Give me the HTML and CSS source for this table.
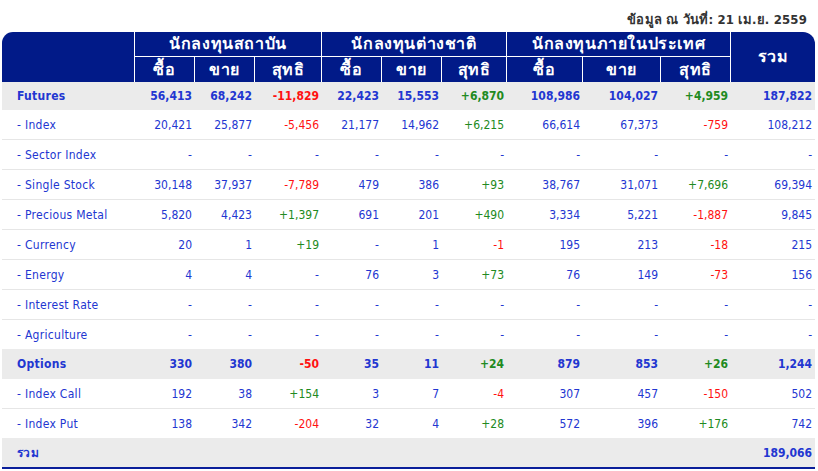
FILE: index.html
```html
<!DOCTYPE html>
<html lang="th">
<head>
<meta charset="utf-8">
<link rel="stylesheet" href="styles.css">
</head>
<body>
<div class="wrap">
  <div class="date">ข้อมูล ณ วันที่: 21 เม.ย. 2559</div>
  <table class="tbl">
    <colgroup>
      <col class="c-label">
      <col class="c60"><col class="c60"><col class="c67">
      <col class="c60"><col class="c60"><col class="c65">
      <col class="c76"><col class="c78"><col class="c70">
      <col class="c-total">
    </colgroup>
    <thead>
      <tr class="h1">
        <th rowspan="2" class="corner-l"></th>
        <th colspan="3">นักลงทุนสถาบัน</th>
        <th colspan="3">นักลงทุนต่างชาติ</th>
        <th colspan="3">นักลงทุนภายในประเทศ</th>
        <th rowspan="2" class="corner-r">รวม</th>
      </tr>
      <tr class="h2">
        <th>ซื้อ</th><th>ขาย</th><th>สุทธิ</th>
        <th>ซื้อ</th><th>ขาย</th><th>สุทธิ</th>
        <th>ซื้อ</th><th>ขาย</th><th>สุทธิ</th>
      </tr>
    </thead>
    <tbody>
      <tr class="grp first">
        <td class="lbl">Futures</td>
        <td>56,413</td><td>68,242</td><td class="neg">-11,829</td>
        <td>22,423</td><td>15,553</td><td class="pos">+6,870</td>
        <td>108,986</td><td>104,027</td><td class="pos">+4,959</td>
        <td>187,822</td>
      </tr>
      <tr class="sub">
        <td class="lbl">- Index</td>
        <td>20,421</td><td>25,877</td><td class="neg">-5,456</td>
        <td>21,177</td><td>14,962</td><td class="pos">+6,215</td>
        <td>66,614</td><td>67,373</td><td class="neg">-759</td>
        <td>108,212</td>
      </tr>
      <tr class="sub">
        <td class="lbl">- Sector Index</td>
        <td>-</td><td>-</td><td>-</td>
        <td>-</td><td>-</td><td>-</td>
        <td>-</td><td>-</td><td>-</td>
        <td>-</td>
      </tr>
      <tr class="sub">
        <td class="lbl">- Single Stock</td>
        <td>30,148</td><td>37,937</td><td class="neg">-7,789</td>
        <td>479</td><td>386</td><td class="pos">+93</td>
        <td>38,767</td><td>31,071</td><td class="pos">+7,696</td>
        <td>69,394</td>
      </tr>
      <tr class="sub">
        <td class="lbl">- Precious Metal</td>
        <td>5,820</td><td>4,423</td><td class="pos">+1,397</td>
        <td>691</td><td>201</td><td class="pos">+490</td>
        <td>3,334</td><td>5,221</td><td class="neg">-1,887</td>
        <td>9,845</td>
      </tr>
      <tr class="sub">
        <td class="lbl">- Currency</td>
        <td>20</td><td>1</td><td class="pos">+19</td>
        <td>-</td><td>1</td><td class="neg">-1</td>
        <td>195</td><td>213</td><td class="neg">-18</td>
        <td>215</td>
      </tr>
      <tr class="sub">
        <td class="lbl">- Energy</td>
        <td>4</td><td>4</td><td>-</td>
        <td>76</td><td>3</td><td class="pos">+73</td>
        <td>76</td><td>149</td><td class="neg">-73</td>
        <td>156</td>
      </tr>
      <tr class="sub">
        <td class="lbl">- Interest Rate</td>
        <td>-</td><td>-</td><td>-</td>
        <td>-</td><td>-</td><td>-</td>
        <td>-</td><td>-</td><td>-</td>
        <td>-</td>
      </tr>
      <tr class="sub last">
        <td class="lbl">- Agriculture</td>
        <td>-</td><td>-</td><td>-</td>
        <td>-</td><td>-</td><td>-</td>
        <td>-</td><td>-</td><td>-</td>
        <td>-</td>
      </tr>
      <tr class="grp">
        <td class="lbl">Options</td>
        <td>330</td><td>380</td><td class="neg">-50</td>
        <td>35</td><td>11</td><td class="pos">+24</td>
        <td>879</td><td>853</td><td class="pos">+26</td>
        <td>1,244</td>
      </tr>
      <tr class="sub">
        <td class="lbl">- Index Call</td>
        <td>192</td><td>38</td><td class="pos">+154</td>
        <td>3</td><td>7</td><td class="neg">-4</td>
        <td>307</td><td>457</td><td class="neg">-150</td>
        <td>502</td>
      </tr>
      <tr class="sub last">
        <td class="lbl">- Index Put</td>
        <td>138</td><td>342</td><td class="neg">-204</td>
        <td>32</td><td>4</td><td class="pos">+28</td>
        <td>572</td><td>396</td><td class="pos">+176</td>
        <td>742</td>
      </tr>
      <tr class="grp total">
        <td class="lbl">รวม</td>
        <td></td><td></td><td></td>
        <td></td><td></td><td></td>
        <td></td><td></td><td></td>
        <td>189,066</td>
      </tr>
    </tbody>
  </table>
</div>
</body>
</html>
```

FILE: styles.css
```css
html, body {
  margin: 0;
  padding: 0;
  background: #ffffff;
}

body {
  font-family: Tahoma, "DejaVu Sans Condensed", "DejaVu Sans", sans-serif;
  font-size: 12px;
  color: #2236d1;
}

.wrap {
  padding: 0 3px 0 2px;
}

.date {
  text-align: right;
  font-weight: bold;
  font-size: 13px;
  letter-spacing: 0.2px;
  color: #333333;
  height: 32px;
  line-height: 20px;
  padding-top: 10px;
  padding-right: 8px;
  box-sizing: border-box;
}

.tbl {
  width: 813px;
  table-layout: fixed;
  border-collapse: separate;
  border-spacing: 0;
}

.c-label { width: 133px; }
.c60 { width: 60px; }
.c65 { width: 65px; }
.c67 { width: 67px; }
.c70 { width: 70px; }
.c76 { width: 76px; }
.c78 { width: 78px; }
.c-total { width: 84px; }

.tbl th {
  background: #011a88;
  color: #ffffff;
  font-weight: bold;
  font-size: 16px;
  line-height: 18px;
  letter-spacing: 0.6px;
  text-align: center;
  padding: 0;
  border-right: 1px solid #ffffff;
  border-bottom: 1px solid #ffffff;
  overflow: hidden;
}

.tbl th.corner-l {
  border-top-left-radius: 11px;
  border-bottom: none;
}

.tbl th.corner-r {
  border-top-right-radius: 12px;
  border-right: none;
  border-bottom: none;
}

.tbl tr.h1 th { height: 24px; }
.tbl tr.h2 th { height: 25px; border-bottom: none; }

.tbl td {
  padding: 0 3px 0 0;
  text-align: right;
  white-space: nowrap;
}

.tbl td.lbl {
  text-align: left;
  padding-left: 15px;
  letter-spacing: 0.3px;
}

.tbl tr.sub td {
  height: 29px;
  border-bottom: 1px solid #e6e6e6;
}

.tbl tr.sub.last td {
  border-bottom: none;
}

.tbl tr.grp td {
  height: 30px;
  background: #ebebeb;
  font-weight: bold;
}

.tbl tr.grp.first td { height: 28px; }

.tbl tr.total td {
  height: 29px;
  border-bottom: 2px solid #0a1f9a;
}

.neg { color: #ff1111; }
.pos { color: #218a21; }
```
